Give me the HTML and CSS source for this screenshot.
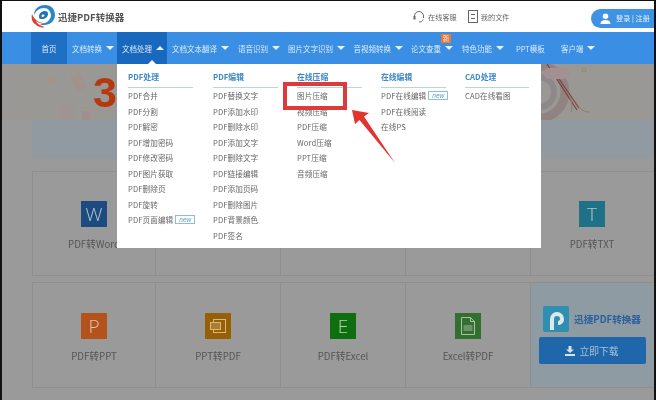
FILE: index.html
```html
<!DOCTYPE html>
<html lang="zh-CN">
<head>
<meta charset="utf-8">
<title>迅捷PDF转换器</title>
<link rel="stylesheet" href="styles.css">
</head>
<body>
<div class="frame">
  <header class="top">
    <div class="brand">
      <svg class="logo" width="24" height="26" viewBox="0 0 24 26">
        <path d="M3 11C3 4 9 1 14 1c6 0 10 4 10 10 0 6-5 10-11 10-2 0-3 0-4-1 4 0 10-2 11-8 0-5-3-8-7-8C8 4 5 7 3 11z" fill="#2a86c8"/>
        <path d="M8 13c0-4 3-6 6-6 2 0 3 1 3 3 0 3-3 5-6 5-1 0-3 0-3-2zM12 10.500c-1 0-1.500 1-1.500 1.500 0 .5.500 1 1 1 1 0 2-1 2-1.500 0-.6-.7-1-1.500-1z" fill="#1c74bb"/>
        <path d="M1 10c-1 4 0 8 3 10 3 3 7 4 10 3-4-1-8-3-9-6 3 2 6 3 9 3-4-1-8-3-10-5-1-1-2-3-3-5z" fill="#d8432f"/>
      </svg>
      <span class="brand-name">迅捷PDF转换器</span>
    </div>
    <div class="tools">
      <svg class="tool-icon" width="12" height="13" viewBox="0 0 12 13"><path d="M1.500 8V6a4.500 4.500 0 0 1 9 0v2M6 12c2 0 3.500-.8 4-2.500" fill="none" stroke="#666" stroke-width="1"/><rect x="0.500" y="6" width="2" height="3.500" fill="#666"/></svg>
      <span class="tool-text">在线客服</span>
      <svg class="tool-icon doc" width="10" height="13" viewBox="0 0 10 13"><rect x=".5" y=".5" width="9" height="12" fill="none" stroke="#666"/><path d="M3 4.500h4M3 8.500h4" stroke="#666"/></svg>
      <span class="tool-text">我的文件</span>
    </div>
    <div class="login">
      <svg width="11" height="11" viewBox="0 0 12 12"><circle cx="6" cy="3.500" r="3" fill="#fff"/><path d="M0.500 12c0-3 2-4.500 5.500-4.500s5.500 1.500 5.500 4.500z" fill="#fff"/></svg>
      <span>登录 | 注册</span>
    </div>
  </header>

  <nav class="nav">
    <a class="nav-item home">首页</a>
    <a class="nav-item w45">文档转换<i class="down"></i></a>
    <a class="nav-item active w50">文档处理<i class="up"></i></a>
    <a class="nav-item">文档文本翻译<i class="down"></i></a>
    <a class="nav-item">语音识别<i class="down"></i></a>
    <a class="nav-item">图片文字识别<i class="down"></i></a>
    <a class="nav-item">音视频转换<i class="down"></i></a>
    <a class="nav-item paper">论文查重<i class="down"></i><b class="badge">新</b></a>
    <a class="nav-item">特色功能<i class="down"></i></a>
    <a class="nav-item ppt">PPT模板</a>
    <a class="nav-item">客户端<i class="down"></i></a>
  </nav>

  <main class="content">
    <section class="banner">
      <span class="deco-a"></span>
      <span class="deco-b"></span>
      <span class="deco-c"></span>
      <span class="deco-d"></span>
      <span class="big-three">3</span>
      <svg class="swirl" width="60" height="56" viewBox="0 0 60 56">
        <circle cx="0" cy="28" r="26" fill="none" stroke="#928383" stroke-width="9"/>
        <circle cx="0" cy="28" r="15" fill="none" stroke="#8f8888" stroke-width="6"/>
        <path d="M8 0l30 46M18 12l22 32" stroke="#7b4040" stroke-width="1.200" fill="none"/>
        <path d="M32 48c2-8 0-14-4-20M37 38c3 6 6 10 14 10" stroke="#947f6a" stroke-width="1" fill="none"/>
        <circle cx="45" cy="6" r="2" fill="none" stroke="#8f8868"/>
        <rect x="5" y="4" width="26" height="11" rx="5" fill="#a39093"/>
      </svg>
    </section>
    <section class="strip"></section>
    <section class="grid first">
      <div class="cell"><span class="ico word">W</span><span class="label">PDF转Word</span></div>
      <div class="cell"></div>
      <div class="cell"></div>
      <div class="cell"></div>
      <div class="cell"><span class="ico txt">T</span><span class="label">PDF转TXT</span></div>
    </section>
    <section class="grid">
      <div class="cell"><span class="ico ppt-i">P</span><span class="label">PDF转PPT</span></div>
      <div class="cell"><span class="ico p2p"><svg width="16" height="14" viewBox="0 0 16 14"><rect x="3.500" y=".5" width="12" height="13" fill="none" stroke="#d8b77a"/><rect x=".5" y="3.500" width="10" height="7" fill="#a77e36" stroke="#d8b77a"/></svg></span><span class="label">PPT转PDF</span></div>
      <div class="cell"><span class="ico xls">E</span><span class="label">PDF转Excel</span></div>
      <div class="cell"><span class="ico e2p"><svg width="14" height="18" viewBox="0 0 14 18"><path d="M.5.5h9l4 4v13H.5z" fill="none" stroke="#a9c2a4"/><path d="M9.500.5v4h4" fill="none" stroke="#a9c2a4"/><rect x="2.500" y="8" width="9" height="6" fill="#6d9468"/></svg></span><span class="label">Excel转PDF</span></div>
      <div class="cell promo">
        <div class="promo-head">
          <svg width="26" height="26" viewBox="0 0 26 26"><rect width="26" height="26" rx="2" fill="#2f8fb0"/><path d="M7 24V13a7 7 0 0 1 14 0c0 4-3 6-6 6v-4c1 0 2-1 2-2a3 3 0 0 0-6 0v11z" fill="#dfe6ea"/></svg>
          <span>迅捷PDF转换器</span>
        </div>
        <div class="promo-btn">
          <svg width="10" height="10" viewBox="0 0 10 10"><path d="M3.500 0h3v3.500H9L5 7 1 3.500h2.500zM0 8h10v2H0z" fill="#d6e2ee"/></svg>
          <span>立即下载</span>
        </div>
      </div>
    </section>
  </main>

  <div class="caret-tip"></div>
  <div class="menu">
    <div class="col">
      <h4>PDF处理</h4>
      <a>PDF合并</a><a>PDF分割</a><a>PDF解密</a><a>PDF增加密码</a><a>PDF修改密码</a><a>PDF图片获取</a><a>PDF删除页</a><a>PDF旋转</a><a>PDF页面编辑<em class="new">new</em></a>
    </div>
    <div class="col">
      <h4>PDF编辑</h4>
      <a>PDF替换文字</a><a>PDF添加水印</a><a>PDF删除水印</a><a>PDF添加文字</a><a>PDF删除文字</a><a>PDF链接编辑</a><a>PDF添加页码</a><a>PDF删除图片</a><a>PDF背景颜色</a><a>PDF签名</a>
    </div>
    <div class="col">
      <h4>在线压缩</h4>
      <a>图片压缩</a><a>视频压缩</a><a>PDF压缩</a><a>Word压缩</a><a>PPT压缩</a><a>音频压缩</a>
    </div>
    <div class="col">
      <h4>在线编辑</h4>
      <a>PDF在线编辑<em class="new">new</em></a><a>PDF在线阅读</a><a>在线PS</a>
    </div>
    <div class="col last">
      <h4>CAD处理</h4>
      <a>CAD在线看图</a>
    </div>
  </div>
  <div class="mark"></div>
  <svg class="arrow" width="46" height="54" viewBox="0 0 46 54"><path d="M1 0l3 14 4.500-4L44 53 13 6.500 18 3z" fill="#e4332f"/></svg>
</div>
</body>
</html>
```
FILE: styles.css
```css
* { box-sizing: border-box; }
html, body { margin: 0; padding: 0; }
body {
  width: 656px;
  height: 400px;
  overflow: hidden;
  background: #000;
  font-family: "Noto Sans CJK SC", "Liberation Sans", sans-serif;
}
.frame {
  position: relative;
  width: 656px;
  height: 400px;
  overflow: hidden;
  border-left: 2px solid #111;
  border-right: 2px solid #111;
  border-top: 1px solid #111;
  background: #9a9a9a;
  filter: blur(0.35px);
}
.top {
  height: 31px;
  background: #fff;
  display: flex;
  align-items: center;
  padding-left: 29px;
}
.brand { display: flex; align-items: center; width: 382px; }
.logo { margin-right: 3px; flex: none; }
.brand-name { font-size: 9.5px; font-weight: 700; color: #555; white-space: nowrap; }
.tools { display: flex; align-items: center; width: 178px; }
.tool-icon { flex: none; margin-right: 3px; }
.tool-icon.doc { margin-left: 11px; margin-right: 3px; }
.tool-text { font-size: 7.2px; color: #666; white-space: nowrap; }
.login {
  margin-top: 3px;
  width: 63px;
  height: 19px;
  border-radius: 10px 0 0 10px;
  background: #3f93e4;
  display: flex;
  align-items: center;
  padding-left: 9px;
  gap: 5px;
  color: #e6f1fb;
  font-size: 7.2px;
  white-space: nowrap;
}
.nav {
  height: 32px;
  background: #3a8fe4;
  display: flex;
  padding-left: 29px;
  align-items: stretch;
}
.nav-item {
  position: relative;
  display: flex;
  align-items: center;
  color: #dcebfa;
  font-size: 7.5px;
  white-space: nowrap;
  padding: 0 4.5px;
}
.nav-item.home { width: 36px; justify-content: center; background: #1f6fc4; padding: 0; }
.nav-item.w45 { width: 50px; padding-left: 5px; }
.nav-item.active { background: #1869bd; width: 50px; padding-left: 5px; }
.nav-item:nth-child(4) { width: 67px; padding-left: 5px; }
.nav-item:nth-child(5) { width: 50px; padding-left: 4px; }
.nav-item:nth-child(6) { width: 65px; padding-left: 4px; }
.nav-item:nth-child(7) { width: 58px; }
.nav-item.paper { width: 50px; padding-left: 4px; }
.nav-item:nth-child(9) { width: 55px; padding-left: 5px; }
.nav-item.ppt { width: 49px; padding-left: 4px; }
.nav-item:nth-child(11) { padding-left: 0; }
.down, .up {
  display: inline-block;
  width: 0; height: 0;
  margin-left: 3.5px;
  border-left: 4px solid transparent;
  border-right: 4px solid transparent;
}
.down { border-top: 4px solid #e6f1fb; }
.up { border-bottom: 4px solid #e6f1fb; }
.badge {
  position: absolute;
  left: 34px;
  top: 2px;
  width: 10px;
  height: 9px;
  background: #e8793a;
  color: #fde9da;
  font-size: 6.5px;
  font-weight: 400;
  line-height: 9px;
  text-align: center;
}
.content { padding-left: 30px; }
.banner {
  position: relative;
  height: 56px;
  margin-left: -30px;
  background: #9a9895;
}
.deco-a, .deco-b, .deco-c, .deco-d { position: absolute; display: block; }
.deco-a { left: 45px; top: 13px; width: 10px; height: 6px; background: #a39389; border-radius: 3px; transform: rotate(20deg); }
.deco-b { left: 71px; top: 10px; width: 11px; height: 17px; background: #a2928c; transform: rotate(-25deg); }
.deco-c { left: 58px; top: 40px; width: 14px; height: 16px; background: #9f9494; }
.deco-d { left: 80px; top: 47px; width: 8px; height: 9px; background: #a08f8d; }
.big-three {
  position: absolute;
  left: 91px;
  top: 0;
  font: 900 43px/56px "Liberation Sans", sans-serif;
  color: #b5380f;
}
.swirl { position: absolute; left: 537px; top: 0; }
.strip { height: 39px; background: #919aa1; }
.grid {
  margin-top: 12px;
  height: 105px;
  display: grid;
  grid-template-columns: 123px 125px 125px 125px 122px;
  border: 1px solid #8f8f8f;
  border-right: 0;
}
.grid + .grid { margin-top: 6px; height: 106px; }
.cell {
  display: flex;
  flex-direction: column;
  align-items: center;
  padding-top: 29px;
  border-right: 1px solid #8f8f8f;
  min-width: 0;
}
.grid + .grid .cell { padding-top: 30px; }
.cell:last-child { border-right: 0; }
.ico {
  width: 26px;
  height: 26px;
  display: flex;
  align-items: center;
  justify-content: center;
  color: #b4c2cc;
  font: 300 19px/26px "Open Sans", "Liberation Sans", sans-serif;
}
.word { background: #1d4b80; }
.txt { background: #1f7188; }
.ppt-i { background: #b4521c; color: #e2c3b0; }
.p2p { background: #976007; }
.xls { background: #0f6e10; color: #b6d2b4; }
.e2p { background: #33702f; }
.label { margin-top: 8.5px; font-size: 9.7px; line-height: 17px; color: #555; white-space: nowrap; }
.grid + .grid .promo { background: #8f9ba3; padding-top: 23px; }
.promo-head { display: flex; align-items: center; gap: 5px; color: #2a5f9e; font-size: 9.6px; font-weight: 700; white-space: nowrap; }
.promo-btn {
  margin-top: 5px;
  width: 107px;
  height: 27px;
  background: #1f66ab;
  border-radius: 2px;
  display: flex;
  align-items: center;
  justify-content: center;
  gap: 4px;
  color: #a9c2da;
  font-size: 9.8px;
}
.caret-tip {
  position: absolute;
  left: 145px;
  top: 59px;
  width: 0; height: 0;
  border-left: 5px solid transparent;
  border-right: 5px solid transparent;
  border-bottom: 5px solid #fff;
}
.menu {
  position: absolute;
  left: 115px;
  top: 63px;
  width: 424px;
  height: 184px;
  background: #fff;
  display: grid;
  grid-template-columns: 85px 84px 84px 84px 1fr;
  padding: 5px 0 0 11px;
}
.col { display: flex; flex-direction: column; }
.col h4 {
  margin: 0;
  width: 65px;
  height: 19px;
  line-height: 16px;
  font-size: 7.8px;
  font-weight: 700;
  color: #3f87c7;
  border-bottom: 1px solid #b9d4ea;
  white-space: nowrap;
}
.col.last h4 { width: 64px; }
.col a {
  display: flex;
  align-items: center;
  height: 15.5px;
  font-size: 7.6px;
  letter-spacing: 0.1px;
  color: #666;
  white-space: nowrap;
}
.new {
  margin-left: 2px;
  width: 20px;
  height: 9px;
  border: 1px solid #8dbce0;
  color: #5a9bd1;
  font: italic 6.5px/7px "Liberation Sans", sans-serif;
  text-align: center;
}
.mark {
  position: absolute;
  left: 281px;
  top: 81px;
  width: 64px;
  height: 28px;
  border: 4px solid #dd3a3c;
}
.arrow { position: absolute; left: 349px; top: 109px; }
```
